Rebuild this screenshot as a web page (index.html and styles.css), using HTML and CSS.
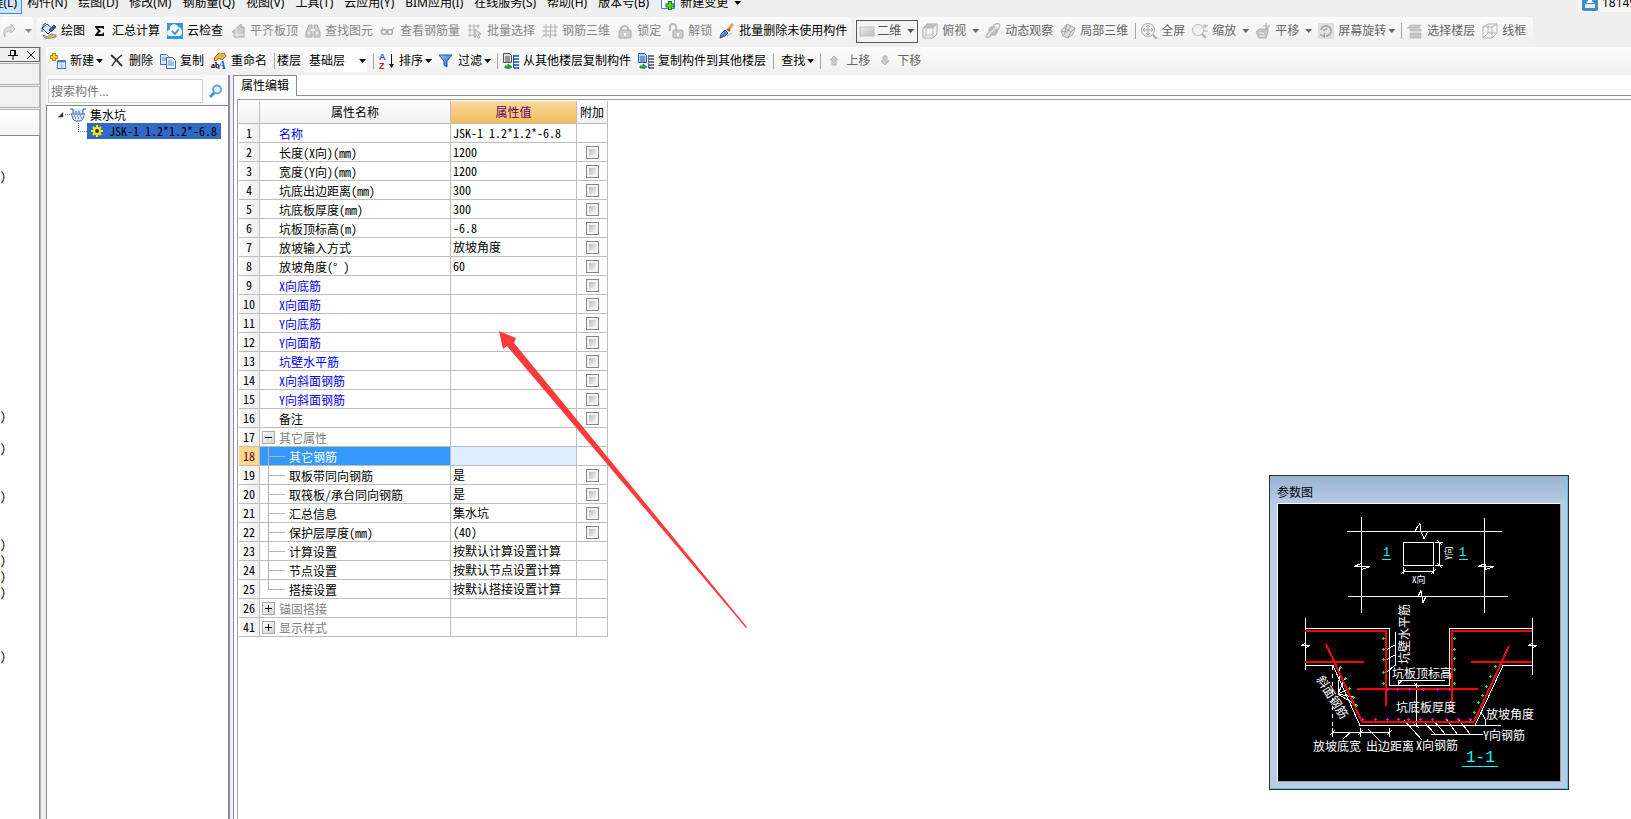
FILE: index.html
```html
<!DOCTYPE html>
<html lang="zh-CN">
<head>
<meta charset="utf-8">
<title>属性编辑</title>
<link rel="stylesheet" href="styles.css">
</head>
<body>
<svg class="defs" aria-hidden="true">
<defs>
<linearGradient id="g-blue" x1="0" y1="0" x2="1" y2="1"><stop offset="0" stop-color="#9cc4f5"/><stop offset="1" stop-color="#1d55c0"/></linearGradient>
<linearGradient id="g-grey" x1="0" y1="0" x2="1" y2="1"><stop offset="0" stop-color="#eee"/><stop offset="1" stop-color="#bbb"/></linearGradient>
<symbol id="i-redo" viewBox="0 0 16 16"><path d="M4 14C1 9 4 4 8 4h2V1l4 5-4 4V8H8C5 8 4 10 4 14z" fill="#ddd" stroke="#bbb"/></symbol>
<symbol id="i-paint" viewBox="0 0 16 16"><path d="M1 5l5-4 6 5-5 5z" fill="#dbe6f5" stroke="#26487f"/><path d="M2 5V2l3-2M1 5v4" fill="none" stroke="#26487f"/><path d="M8 7l5-5 2 2-5 5z" fill="#3c68b0" stroke="#1d3a70"/><path d="M3 12l3 2 4-3 5 1v2l-5 1-4 1-4-3z" fill="#e6b93f" stroke="#7288b5"/></symbol>
<symbol id="i-sigma" viewBox="0 0 16 16"><path d="M3 3h9v3h-1l-1-1H6l3 3-3 3h4l2-2v4H3v-1l3-4-3-4z" fill="#111"/></symbol>
<symbol id="i-cloud" viewBox="0 0 16 16"><path d="M0 0h16v16H0z" fill="#2f9bd8"/><path d="M3 13a3 3 0 010-6 4 4 0 018-3 5 5 0 012 9z" fill="#fff"/><path d="M5 8l3 3 4-5" fill="none" stroke="#2f9bd8" stroke-width="2"/></symbol>
<symbol id="i-slab" viewBox="0 0 16 16"><path d="M2 9l9-8v3l3 0v10H4V9z" fill="#ccc" stroke="#aaa"/><path d="M4 12h10M7 8v6M2 6h5" stroke="#eee"/></symbol>
<symbol id="i-bino" viewBox="0 0 16 16"><path d="M1 14V9l3-7h3v12zM9 14V2h3l3 7v5z" fill="#ccc" stroke="#aaa"/><path d="M6 7h4M3 10h2M11 10h2" stroke="#eee" stroke-width="2"/></symbol>
<symbol id="i-glasses" viewBox="0 0 16 16"><circle cx="4" cy="9" r="2.5" fill="none" stroke="#aaa" stroke-width="1.5"/><circle cx="10" cy="9" r="2.5" fill="none" stroke="#aaa" stroke-width="1.5"/><path d="M12 8l2-4M6 8h2M1 8l2-4" stroke="#aaa"/></symbol>
<symbol id="i-pick" viewBox="0 0 16 16"><path d="M1 3h12M1 7h6M1 12h6M3 1v13M7 1v13M11 1v5" stroke="#b5b5b5" fill="none"/><path d="M8 6l6 5-3 .5 2 3-1.500 1-2-3-1.500 2z" fill="#ddd" stroke="#aaa"/></symbol>
<symbol id="i-rebar" viewBox="0 0 16 16"><path d="M1 4h15M0 8h15M1 12h14M4 1v13M9 1l-1 14M13 1v13M0 14l4-3" stroke="#b0b0b0" fill="none"/></symbol>
<symbol id="i-lock" viewBox="0 0 16 16"><path d="M4 8V5a4 4 0 017 0v3" fill="none" stroke="#bbb" stroke-width="2"/><rect x="2" y="7" width="12" height="8" rx="1" fill="#ccc" stroke="#aaa"/><path d="M8 10v3" stroke="#fff" stroke-width="2"/></symbol>
<symbol id="i-unlock" viewBox="0 0 16 16"><path d="M2 8V4a3 3 0 016 0v3" fill="none" stroke="#bbb" stroke-width="2"/><rect x="5" y="7" width="10" height="8" rx="1" fill="#ccc" stroke="#aaa"/><path d="M10 10v3" stroke="#fff" stroke-width="2"/></symbol>
<symbol id="i-brush" viewBox="0 0 16 16"><path d="M14 1L8 8" stroke="#e9a06a" stroke-width="3"/><path d="M6 7l3 3-3 3-5 2 1-4z" fill="#4a86d0" stroke="#2a5596"/><path d="M9 6l2 2" stroke="#b9442e" stroke-width="2"/><path d="M8 13l5-3M2 12l3-3" stroke="#9fb2cc"/></symbol>
<symbol id="i-plane" viewBox="0 0 16 16"><rect x="1" y="4" width="14" height="9" fill="url(#g-grey)" stroke="#bbb"/></symbol>
<symbol id="i-cube" viewBox="0 0 16 16"><path d="M1 5l4-4h10v10l-4 4H1z" fill="#f3f3f3" stroke="#aaa"/><path d="M1 5l4-4h10l-4 4z" fill="#bbb"/><path d="M1 5h10v10M11 5l4-4M4 6v6h7M1 15l3-3" fill="none" stroke="#bbb"/></symbol>
<symbol id="i-planet" viewBox="0 0 16 16"><circle cx="8" cy="8" r="5" fill="#bbb"/><path d="M4 9C-1 15 1 16 7 12s9-9 7-11-6 2-6 2" fill="none" stroke="#bbb" stroke-width="1.500"/><path d="M4 11l8-7" stroke="#ddd" stroke-width="2"/></symbol>
<symbol id="i-part" viewBox="0 0 16 16"><path d="M1 8l6-7 8 4-2 6-5 4-5-2z" fill="#ddd" stroke="#aaa"/><path d="M4 5l7 4-3 5M7 1l-3 11M11 3L7 9l-6-1M11 9l4-4" fill="none" stroke="#aaa"/></symbol>
<symbol id="i-full" viewBox="0 0 16 16"><circle cx="7" cy="7" r="6.500" fill="#f2f2f2" stroke="#aaa"/><path d="M7 2v10M2 7h10M5 4l2-2 2 2M5 10l2 2 2-2M4 5L2 7l2 2M10 5l2 2-2 2" fill="none" stroke="#aaa"/><path d="M12 12l4 4" stroke="#aaa" stroke-width="2"/></symbol>
<symbol id="i-zoom" viewBox="0 0 16 16"><circle cx="6" cy="7" r="5.500" fill="#f2f2f2" stroke="#bbb"/><path d="M10 11l4 4" stroke="#aaa" stroke-width="2"/><path d="M11 3h5M13 1v4M12 8h4" stroke="#aaa"/></symbol>
<symbol id="i-hand" viewBox="0 0 16 16"><path d="M1 9l3-3 6 0 3-2v5l-2 6H4z" fill="#c4c4c4" stroke="#b0b0b0"/><path d="M8 3h7M11 0v7" stroke="#aaa"/><path d="M4 9l5 2M5 13h5" stroke="#eee"/></symbol>
<symbol id="i-rotate" viewBox="0 0 16 16"><path d="M0 0h16v16H0z" fill="#e0e0e0"/><path d="M3 7a5 5 0 1110 2c-1 3-3 4-5 4" fill="none" stroke="#aaa" stroke-width="2"/><path d="M7 10v5l-3-2z" fill="#999"/><path d="M2 12h2M5 7h2M8 5v2" stroke="#888" fill="none"/></symbol>
<symbol id="i-floors" viewBox="0 0 16 16"><path d="M3 2h11l-2 3H2zM3 6h11v2H3zM3 10h11v2H3zM3 13h11v2H3z" fill="#ccc" stroke="#aaa" stroke-width=".6"/><path d="M0 5h3" stroke="#aaa"/></symbol>
<symbol id="i-wire" viewBox="0 0 16 16"><path d="M1 4l5-3h9v9l-5 5H1zM1 4h9v11M10 4l5-3M6 1v9h9M1 15l5-5" fill="none" stroke="#b5b5b5"/></symbol>
<symbol id="i-new" viewBox="0 0 16 16"><path d="M4 0v8M0 4h8" stroke="#b48c13" stroke-width="4"/><path d="M4 1v6M1 4h6" stroke="#f4cf45" stroke-width="2"/><rect x="7.500" y="7.500" width="8" height="8" fill="#fff" stroke="#4d80c8"/><path d="M7 8.500h9" stroke="#4d80c8" stroke-width="2"/><path d="M9 12h5M9 14h5M11.500 10v5" stroke="#9dbde6"/></symbol>
<symbol id="i-x" viewBox="0 0 16 16"><path d="M2 2c4 3 7 7 11 11" stroke="#333" stroke-width="2" fill="none"/><path d="M13 2C9 5 5 9 3 13" stroke="#333" stroke-width="1.500" fill="none"/></symbol>
<symbol id="i-copy" viewBox="0 0 16 16"><path d="M.5 1.500h6l2 2v8h-8z" fill="#dce9fa" stroke="#3b6fbd"/><path d="M6.500 4.500h6l3 3v8h-9z" fill="#eaf2fc" stroke="#3b6fbd"/><path d="M8 8h4M8 10h6M8 12h6M2 5h4M2 7h4" stroke="#5a8bd3"/></symbol>
<symbol id="i-rename" viewBox="0 0 16 16"><path d="M4 4l4-4h5l2 3-4 4-3-2-3 3-2-1z" fill="#e6b84b" stroke="#96701a"/><text x="0" y="15" class="ic-ab">ab</text><text x="7" y="16" class="ic-a">A</text></symbol>
<symbol id="i-sort" viewBox="0 0 16 16"><text x="0" y="7" class="ic-s ic-sa">A</text><text x="0" y="16" class="ic-s ic-sz">Z</text><path d="M12.500 1v12" stroke="#111"/><path d="M10 11h5l-2.500 4z" fill="#111"/></symbol>
<symbol id="i-funnel" viewBox="0 0 16 16"><path d="M1 2h13L9 8v6l-3-2V8z" fill="url(#g-blue)" stroke="#2458b4"/></symbol>
<symbol id="i-from" viewBox="0 0 16 16"><path d="M.5.500h6l2 2v7h-8z" fill="#ddd" stroke="#555"/><path d="M2 4h5M2 6h5M2 8h5" stroke="#555"/><path d="M2 13h3v-2l4 3-4 2v-1H2z" fill="#29a03a" stroke="#29a03a"/><path d="M11 3h5M11 6h5M11 9h5M11 12h5M11 15h5" stroke="#3d7cc6" stroke-width="2"/><path d="M10.500 2v13" stroke="#1f4f90"/></symbol>
<symbol id="i-to" viewBox="0 0 16 16"><path d="M.5.500h6l2 2v7h-8z" fill="#b8d2f5" stroke="#2b5eb0"/><path d="M2 4h5M2 6h5M2 8h5" stroke="#2b5eb0"/><path d="M2 13h3v-2l4 3-4 2v-1H2z" fill="#29a03a" stroke="#29a03a"/><path d="M11 3h5M11 6h5M11 9h5M11 12h5M11 15h5" stroke="#777" stroke-width="2"/><path d="M10.500 2v13" stroke="#3d7cc6"/></symbol>
<symbol id="i-up" viewBox="0 0 16 16"><path d="M8 3l4 4h-2v5H6V7H4z" fill="#ccc" stroke="#b5b5b5"/></symbol>
<symbol id="i-down" viewBox="0 0 16 16"><path d="M8 12l4-4h-2V3H6v5H4z" fill="#ccc" stroke="#b5b5b5"/></symbol>
<symbol id="i-change" viewBox="0 0 16 16"><path d="M1.500 0v13.500h13V0" fill="#fff" stroke="#3f7fc0"/><path d="M10 6v9M5.500 10.500h9" stroke="#1d7f1d" stroke-width="4"/><path d="M10 7v7M6.500 10.500h7" stroke="#5fd03a" stroke-width="2"/></symbol>
<symbol id="i-user" viewBox="0 0 16 16"><rect width="16" height="16" rx="2" fill="#3f8fc6"/><path d="M6 2h4v4l2 2H4l2-2z" fill="#fff"/><path d="M3 9h10v4H3z" fill="#dff0fb"/></symbol>
<symbol id="i-pit" viewBox="0 0 16 16"><path d="M0 2h3v5h10V2h3M1 6c1 0 1 8 5 8h4c4 0 4-8 5-8" fill="#d9e8fb" stroke="#2c5fb3"/><path d="M4 9h1m2 0h1m2 0h1M5 11h1m2 0h1m2 0h1M6 4v2M9 4v2" stroke="#2c5fb3"/></symbol>
<symbol id="i-sun" viewBox="0 0 12 12"><path d="M6 0v12M0 6h12M2 2l8 8M10 2l-8 8" stroke="#ffee00" stroke-width="2"/><circle cx="6" cy="6" r="4" fill="#ffee00"/><circle cx="6" cy="6" r="2" fill="#333"/></symbol>
</defs>
</svg>

<nav class="menubar">
  <button class="menu active">工程(L)</button>
  <button class="menu">构件(N)</button><button class="menu">绘图(D)</button><button class="menu">修改(M)</button><button class="menu">钢筋量(Q)</button><button class="menu">视图(V)</button><button class="menu">工具(T)</button><button class="menu">云应用(Y)</button><button class="menu">BIM应用(I)</button><button class="menu">在线服务(S)</button><button class="menu">帮助(H)</button><button class="menu">版本号(B)</button>
  <button class="menu with-icon"><svg class="ic"><use href="#i-change"/></svg>新建变更<i class="caret wide"></i></button>
  <button class="menu account"><svg class="ic"><use href="#i-user"/></svg>18149</button>
</nav>

<div class="toolbar-row">
  <div class="bar history"><button class="tool off" aria-label="重做"><svg class="ic"><use href="#i-redo"/></svg><i class="caret wide"></i></button></div>
  <div class="bar commands">
    <button class="tool"><svg class="ic"><use href="#i-paint"/></svg>绘图</button>
    <button class="tool"><svg class="ic"><use href="#i-sigma"/></svg>汇总计算</button>
    <button class="tool"><svg class="ic"><use href="#i-cloud"/></svg>云检查</button>
    <button class="tool off"><svg class="ic"><use href="#i-slab"/></svg>平齐板顶</button>
    <button class="tool off"><svg class="ic"><use href="#i-bino"/></svg>查找图元</button>
    <button class="tool off"><svg class="ic"><use href="#i-glasses"/></svg>查看钢筋量</button>
    <button class="tool off"><svg class="ic"><use href="#i-pick"/></svg>批量选择</button>
    <button class="tool off"><svg class="ic"><use href="#i-rebar"/></svg>钢筋三维</button>
    <button class="tool off"><svg class="ic"><use href="#i-lock"/></svg>锁定</button>
    <button class="tool off"><svg class="ic"><use href="#i-unlock"/></svg>解锁</button>
    <button class="tool"><svg class="ic"><use href="#i-brush"/></svg>批量删除未使用构件</button>
  </div>
  <div class="bar views">
    <label class="view-mode"><svg class="ic"><use href="#i-plane"/></svg><select aria-label="视图模式"><option>二维</option><option>三维</option></select><i class="caret"></i></label>
    <button class="tool dim"><svg class="ic"><use href="#i-cube"/></svg>俯视<i class="caret wide"></i></button>
    <button class="tool dim"><svg class="ic"><use href="#i-planet"/></svg>动态观察</button>
    <button class="tool dim"><svg class="ic"><use href="#i-part"/></svg>局部三维</button>
    <i class="sep"></i>
    <button class="tool dim"><svg class="ic"><use href="#i-full"/></svg>全屏</button>
    <button class="tool dim"><svg class="ic"><use href="#i-zoom"/></svg>缩放<i class="caret wide"></i></button>
    <button class="tool dim"><svg class="ic"><use href="#i-hand"/></svg>平移<i class="caret wide"></i></button>
    <button class="tool dim"><svg class="ic"><use href="#i-rotate"/></svg>屏幕旋转<i class="caret"></i></button>
    <i class="sep"></i>
    <button class="tool dim"><svg class="ic"><use href="#i-floors"/></svg>选择楼层</button>
    <button class="tool dim"><svg class="ic"><use href="#i-wire"/></svg>线框</button>
  </div>
</div>

<main class="main">
  <aside class="dock">
    <header class="dock-head">
      <button class="mini" aria-label="固定"><svg viewBox="0 0 12 12"><path d="M3.500 1.500h5v5h-5zM7.500 2v4M1 6.500h10M6 7v4" fill="none" stroke="#000"/></svg></button>
      <button class="mini" aria-label="关闭"><svg viewBox="0 0 12 12"><path d="M2 2l8 8M10 2l-8 8" fill="none" stroke="#333"/></svg></button>
    </header>
    <div class="dock-strip"></div><div class="dock-strip"></div><div class="dock-strip last"></div>
    <ul class="dock-list">
      <li></li><li></li><li>)</li><li></li><li></li><li></li><li></li><li></li><li></li><li></li><li></li><li></li><li></li><li></li><li></li><li></li><li></li><li>)</li><li></li><li>X)</li><li></li><li></li><li>)</li><li></li><li></li><li>L)</li><li>)</li><li>)</li><li>)</li><li></li><li></li><li></li><li>)</li>
    </ul>
  </aside>
  <div class="gutter"></div>

  <section class="content">
    <div class="toolbar2">
      <button class="tool"><svg class="ic"><use href="#i-new"/></svg>新建<i class="caret"></i></button>
      <button class="tool"><svg class="ic"><use href="#i-x"/></svg>删除</button>
      <button class="tool"><svg class="ic"><use href="#i-copy"/></svg>复制</button>
      <button class="tool"><svg class="ic"><use href="#i-rename"/></svg>重命名</button>
      <i class="sep tight"></i>
      <label class="floor">楼层<select><option>基础层</option><option>首层</option></select><i class="caret"></i></label>
      <i class="sep"></i>
      <button class="tool"><svg class="ic"><use href="#i-sort"/></svg>排序<i class="caret"></i></button>
      <button class="tool"><svg class="ic"><use href="#i-funnel"/></svg>过滤<i class="caret"></i></button>
      <i class="sep"></i>
      <button class="tool"><svg class="ic"><use href="#i-from"/></svg>从其他楼层复制构件</button>
      <button class="tool"><svg class="ic"><use href="#i-to"/></svg>复制构件到其他楼层</button>
      <i class="sep loose"></i>
      <button class="tool">查找<i class="caret"></i></button>
      <i class="sep"></i>
      <button class="tool dim"><svg class="ic"><use href="#i-up"/></svg>上移</button>
      <button class="tool dim"><svg class="ic"><use href="#i-down"/></svg>下移</button>
    </div>

    <div class="work">
      <aside class="components">
        <div class="search">
          <input type="text" placeholder="搜索构件..." aria-label="搜索构件">
          <button aria-label="搜索"><svg viewBox="0 0 14 14"><circle cx="8" cy="5.500" r="4" fill="#e8f4fd" stroke="#5aa7e0" stroke-width="2"/><path d="M5 9l-4 4" stroke="#4a93d0" stroke-width="3"/></svg></button>
        </div>
        <ul class="tree">
          <li class="node"><svg class="twist" viewBox="0 0 8 8"><path d="M7 1v6H1z" fill="#333"/></svg><i class="dots"></i><svg class="ic"><use href="#i-pit"/></svg>集水坑</li>
          <li class="leaf"><i class="elbow"></i><span class="picked"><svg class="sun"><use href="#i-sun"/></svg>JSK-1 1.2*1.2*-6.8</span></li>
        </ul>
      </aside>
      <div class="splitter"></div>
      <section class="editor">
        <div class="tabs"><button class="tab">属性编辑</button></div>
        <div class="sheet">
          <table class="grid">
            <colgroup><col class="c-no"><col class="c-name"><col class="c-val"><col class="c-add"></colgroup>
            <thead><tr><th></th><th>属性名称</th><th class="hot">属性值</th><th>附加</th></tr></thead>
            <tbody>
              <tr><th>1</th><td class="key">名称</td><td>JSK-1 1.2*1.2*-6.8</td><td></td></tr>
              <tr><th>2</th><td>长度(X向)(mm)</td><td>1200</td><td><input type="checkbox" aria-label="附加 长度"></td></tr>
              <tr><th>3</th><td>宽度(Y向)(mm)</td><td>1200</td><td><input type="checkbox" aria-label="附加 宽度"></td></tr>
              <tr><th>4</th><td>坑底出边距离(mm)</td><td>300</td><td><input type="checkbox" aria-label="附加 坑底出边距离"></td></tr>
              <tr><th>5</th><td>坑底板厚度(mm)</td><td>300</td><td><input type="checkbox" aria-label="附加 坑底板厚度"></td></tr>
              <tr><th>6</th><td>坑板顶标高(m)</td><td>-6.8</td><td><input type="checkbox" aria-label="附加 坑板顶标高"></td></tr>
              <tr><th>7</th><td>放坡输入方式</td><td>放坡角度</td><td><input type="checkbox" aria-label="附加 放坡输入方式"></td></tr>
              <tr><th>8</th><td>放坡角度(° )</td><td>60</td><td><input type="checkbox" aria-label="附加 放坡角度"></td></tr>
              <tr><th>9</th><td class="key">X向底筋</td><td></td><td><input type="checkbox" aria-label="附加 X向底筋"></td></tr>
              <tr><th>10</th><td class="key">X向面筋</td><td></td><td><input type="checkbox" aria-label="附加 X向面筋"></td></tr>
              <tr><th>11</th><td class="key">Y向底筋</td><td></td><td><input type="checkbox" aria-label="附加 Y向底筋"></td></tr>
              <tr><th>12</th><td class="key">Y向面筋</td><td></td><td><input type="checkbox" aria-label="附加 Y向面筋"></td></tr>
              <tr><th>13</th><td class="key">坑壁水平筋</td><td></td><td><input type="checkbox" aria-label="附加 坑壁水平筋"></td></tr>
              <tr><th>14</th><td class="key">X向斜面钢筋</td><td></td><td><input type="checkbox" aria-label="附加 X向斜面钢筋"></td></tr>
              <tr><th>15</th><td class="key">Y向斜面钢筋</td><td></td><td><input type="checkbox" aria-label="附加 Y向斜面钢筋"></td></tr>
              <tr><th>16</th><td>备注</td><td></td><td><input type="checkbox" aria-label="附加 备注"></td></tr>
              <tr><th>17</th><td class="group open"><button class="fold" aria-label="折叠"></button>其它属性</td><td></td><td></td></tr>
              <tr class="current"><th>18</th><td class="child">其它钢筋</td><td></td><td></td></tr>
              <tr><th>19</th><td class="child">取板带同向钢筋</td><td>是</td><td><input type="checkbox" aria-label="附加 取板带同向钢筋"></td></tr>
              <tr><th>20</th><td class="child">取筏板/承台同向钢筋</td><td>是</td><td><input type="checkbox" aria-label="附加 取筏板承台同向钢筋"></td></tr>
              <tr><th>21</th><td class="child">汇总信息</td><td>集水坑</td><td><input type="checkbox" aria-label="附加 汇总信息"></td></tr>
              <tr><th>22</th><td class="child">保护层厚度(mm)</td><td>(40)</td><td><input type="checkbox" aria-label="附加 保护层厚度"></td></tr>
              <tr><th>23</th><td class="child">计算设置</td><td>按默认计算设置计算</td><td></td></tr>
              <tr><th>24</th><td class="child">节点设置</td><td>按默认节点设置计算</td><td></td></tr>
              <tr><th>25</th><td class="child end">搭接设置</td><td>按默认搭接设置计算</td><td></td></tr>
              <tr><th>26</th><td class="group"><button class="fold" aria-label="展开"></button>锚固搭接</td><td></td><td></td></tr>
              <tr><th>41</th><td class="group"><button class="fold" aria-label="展开"></button>显示样式</td><td></td><td></td></tr>
            </tbody>
          </table>
        </div>
      </section>
    </div>
  </section>
</main>

<svg class="pointer" viewBox="499 331 248 297" aria-hidden="true"><path d="M499 331l17 7-2 5 233 284-1 1L507 346l-4 3z" fill="#fd3a3a"/></svg>

<section class="param-window">
  <h2>参数图</h2>
  <svg class="drawing" viewBox="1278 504 282 277">
    <defs>
      <marker id="m-green" markerWidth="3" markerHeight="3" refX="1.500" refY="1.500" markerUnits="userSpaceOnUse"><path d="M0 1.500h3M1.500 0v3" stroke="#0f0"/></marker>
      <marker id="m-pink" markerWidth="3" markerHeight="3" refX="1.500" refY="1.500" markerUnits="userSpaceOnUse"><path d="M0 1.500h3M1.500 0v3" stroke="#f0f"/></marker>
    </defs>
    <g class="white">
      <path d="M1347 531.500h68l2-4 3-4 1 8 3 7 4-7h-13 87M1361.500 517v96M1484.500 518v95M1348 596.500h70l3-6 2 12 3-6h-8 90"/>
      <path d="M1354 566.500l7-3 1 6 8-3zM1478 566.500l7-3 1 6 8-3z"/>
      <path d="M1403.500 542.500h30v23h-30z"/>
      <path d="M1439.500 542v23M1435 542.500h8M1435 565.500h8M1437 540l5 5M1437 563l5 5M1403 571.500h31M1403.500 567v7M1433.500 567v7M1401 574l5-5M1431 574l5-5"/>
      <path d="M1305.500 618v52M1532.500 618v57M1301 645.500l4-2 1 4 4-2zM1528 645.500l4-2 1 4 4-2z"/>
      <path d="M1305 628.500h84.500v57h60v-57h83M1305 665.500h28l27 60h141M1475 725.500l28-60h30"/>
      <path d="M1332.500 666v60" stroke-dasharray="4 4"/>
      <path d="M1416.500 683v43M1414 683l5 4M1414 724l5 4M1400 680.500h45M1398.500 684v-4h4z"/>
      <path d="M1395.500 632v34M1386 650l9-5M1386 660l9-5M1386 673l9-8"/>
      <path d="M1340 667l-2 27 7-16M1350 688l-12 6 15 3M1356 705l-18-11"/>
      <path d="M1332 732.500h58M1332.500 728v9M1360.500 728v9M1389.500 728v9M1330 735l5-5M1358 735l5-5M1387 735l5-5M1343 739l8-7M1368 729l13 13M1404 720l18 20"/>
      <path d="M1431 734.500h52M1423 721l12 13M1434 721l11 13M1447 720l10 14M1459 720l11 14M1480 712q6 5 6 13"/>
    </g>
    <g class="red">
      <path d="M1305 631h81v75M1532 631h-80v75M1305 662h59M1471 662h61M1357 689h121M1362 722h112"/>
      <path d="M1326 644l36 78M1474 722l35-76" class="thin"/>
    </g>
    <g class="dots green">
      <polyline points="1383.500,638.500 1383.500,649.500 1383.500,659.500 1383.500,672.500 1383.500,683.500 1340.500,667.500 1345.500,678.500 1349.500,688.500 1353.500,697.500 1356.500,705.500"/>
      <polyline points="1454.500,638.500 1454.500,649.500 1454.500,658.500 1454.500,669.500 1454.500,683.500 1495.500,666.500 1490.500,676.500 1486.500,686.500 1482.500,695.500 1478.500,702.500 1474.500,712.500"/>
    </g>
    <g class="dots pink">
      <polyline points="1387.500,689.500 1397.500,689.500 1409.500,689.500 1423.500,689.500 1437.500,689.500 1449.500,689.500 1362.500,719.500 1375.500,719.500 1387.500,719.500 1398.500,719.500 1408.500,719.500 1420.500,719.500 1432.500,719.500 1446.500,719.500 1458.500,719.500 1470.500,719.500"/>
    </g>
    <g class="labels">
      <text x="1412" y="583" class="small">X向</text>
      <text transform="translate(1452 560) rotate(-90)" class="small">Y向</text>
      <text transform="translate(1409 664) rotate(-90)">坑壁水平筋</text>
      <text x="1392" y="678">坑板顶标高</text>
      <text x="1396" y="712">坑底板厚度</text>
      <text x="1486" y="719">放坡角度</text>
      <text x="1483" y="740">Y向钢筋</text>
      <text x="1416" y="750">X向钢筋</text>
      <text x="1313" y="751">放坡底宽</text>
      <text x="1366" y="751">出边距离</text>
      <text transform="translate(1316 679) rotate(58)" class="tilt">斜面钢筋</text>
    </g>
    <g class="cyan">
      <text x="1383" y="556">1</text><text x="1459" y="556">1</text><text x="1466" y="762" class="big">1-1</text>
      <path d="M1382 559.500h9M1459 559.500h9M1462 766.500h36"/>
    </g>
  </svg>
</section>
</body>
</html>
```
FILE: styles.css
```css
* { box-sizing: border-box; }
html, body { height: 100%; }
body {
  margin: 0;
  display: flex;
  flex-direction: column;
  overflow: hidden;
  position: relative;
  background: #efefef;
  color: #000;
  font: 12px/16px "Noto Sans", "Noto Sans CJK SC", sans-serif;
}
button, input, select { font: inherit; color: inherit; margin: 0; padding: 0; border: 0; background: none; border-radius: 0; }
ul { margin: 0; padding: 0; list-style: none; }
.defs { position: absolute; width: 0; height: 0; }
.ic { width: 16px; height: 16px; flex: none; }
.ic-ab { font: bold 8px "Liberation Serif", serif; }
.ic-a { font: italic bold 12px "Liberation Serif", serif; fill: #2357b5; }
.ic-s { font: bold 9px "Liberation Sans", sans-serif; }
.ic-sa { fill: #2c5aa8; }
.ic-sz { fill: #a02c2c; }

.caret { flex: none; width: 7px; height: 4px; margin: 0 -1px 0 2px; background: currentColor; clip-path: polygon(0 0, 100% 0, 50% 100%); }
.caret.wide { margin-left: 6px; }
.sep { flex: none; width: 1px; height: 16px; margin-right: 5px; background: #a5a5a5; }
.sep.tight { margin-right: 2px; }
.sep.loose { margin-right: 7px; }

.menubar { flex: none; display: flex; align-items: flex-start; height: 17px; overflow: hidden; }
.menu { flex: none; height: 18px; margin: -6px 11px 0 0; display: flex; align-items: center; white-space: nowrap; }
.menu.active { width: 22px; height: 20px; margin-right: 5px; padding: 0 4px 2px 0; justify-content: flex-end; overflow: hidden; background: #cce4fb; border: 1px solid #3c8fe0; border-left: 0; }
.menu.with-icon { gap: 4px; }
.menu.with-icon .caret { margin-left: 2px; }
.menu.account { height: 18px; width: 53px; margin: -6px 0 0 auto; padding-left: 4px; gap: 4px; background: #f7f7f7; overflow: hidden; }

.toolbar-row { flex: none; display: flex; gap: 4px; height: 30px; }
.bar { display: flex; align-items: center; height: 28px; border-radius: 3px; background: linear-gradient(#fbfbfb, #efefef); }
.bar.history { flex: none; width: 33px; padding-left: 1px; overflow: hidden; }
.bar.history .caret { margin-left: 4px; }
.bar.commands { padding-left: 4px; }
.bar.views { padding-left: 1px; }
.tool { flex: none; display: flex; align-items: center; height: 24px; margin-right: 7px; white-space: nowrap; }
.tool .ic { margin-right: 4px; }
.tool.off { color: #868686; }
.tool.dim { color: #666; }
.bar.commands .tool:last-child { margin-right: 4px; }
.view-mode { flex: none; display: flex; align-items: center; width: 62px; height: 23px; margin-right: 4px; padding-left: 2px; border: 1px solid #555; background: #f4f4f4; color: #555; }
select { appearance: none; }
.view-mode select { width: 28px; margin-left: 2px; }

.main { flex: 1; min-height: 0; display: flex; }
.dock { flex: none; width: 41px; display: flex; flex-direction: column; border-right: 1px solid #b5b5b5; }
.dock-head { flex: none; display: flex; align-items: center; justify-content: flex-end; gap: 6px; height: 15px; padding-right: 2px; border: 1px solid #666; border-left: 0; }
.mini { width: 12px; height: 12px; }
.mini svg { display: block; }
.dock-strip { flex: none; height: 22px; margin-top: 1px; border: 1px solid #b0b0b0; border-left: 0; background: #f0f0f0; }
.dock-strip.last { height: 26px; background: linear-gradient(#fff, #f4f4f4); border-bottom: 0; }
.dock-list { flex: 1; min-height: 0; overflow: hidden; border-top: 1px solid #828790; border-right: 1px solid #828790; background: #fff; font-family: "Noto Sans Mono CJK SC", "Noto Sans CJK SC", sans-serif; }
.dock-list li { display: flex; justify-content: flex-end; width: 6px; height: 16px; overflow: hidden; }
.gutter { flex: none; width: 5px; background: #eee; }

.content { flex: 1; min-width: 0; display: flex; flex-direction: column; }
.toolbar2 { flex: none; display: flex; align-items: center; height: 28px; padding-left: 4px; background: linear-gradient(#fdfdfd, #efefef); }
.floor { flex: none; display: flex; align-items: center; width: 92px; margin-right: 4px; }
.floor select { width: 60px; height: 22px; margin-left: 6px; padding-left: 2px; background: #fff; }
.floor .caret { margin-left: -8px; }
.work { flex: 1; min-height: 0; display: flex; background: #fff; }
.components { flex: none; width: 184px; display: flex; flex-direction: column; border-right: 2px solid #888d96; }
.search { flex: none; display: flex; align-items: center; height: 30px; padding: 2px 3px 0 2px; gap: 4px; background: #f8f8f8; }
.search input { flex: 1; min-width: 0; height: 24px; padding-left: 2px; border: 1px solid #d0d0d0; background: #fff; }
.search input::placeholder { color: #777; opacity: 1; }
.search button { flex: none; display: flex; align-items: center; justify-content: center; width: 18px; height: 22px; background: #fff; }
.search svg { width: 14px; height: 14px; }
.tree { flex: 1; min-height: 0; border-top: 1px solid #828790; border-left: 1px solid #828790; font-family: "Noto Sans Mono CJK SC", "Noto Sans CJK SC", sans-serif; }
.node { display: flex; align-items: center; height: 17px; padding-left: 10px; }
.twist { width: 7px; height: 7px; }
.dots { width: 5px; margin-left: 1px; border-top: 1px dotted #888; }
.node .ic { margin-right: 4px; }
.leaf { display: flex; height: 16px; padding-left: 31px; }
.elbow { width: 9px; height: 9px; border-left: 1px dotted #777; border-bottom: 1px dotted #777; }
.picked { display: flex; align-items: center; gap: 6px; padding: 0 4px; background: #316ac5; white-space: nowrap; }
.sun { width: 12px; height: 12px; }
.splitter { flex: none; width: 3px; background: #efefef; }

.editor { flex: 1; min-width: 0; display: flex; flex-direction: column; }
.tabs { flex: none; display: flex; height: 21px; border-bottom: 1px solid #8c8c96; }
.tab { height: 21px; width: 64px; border: solid #8c8c96; border-width: 1px 1px 0; background: #fff; }
.sheet { flex: 1; min-height: 0; padding: 3px 0 0 3px; border-left: 1px solid #8c8c96; }
.grid { display: block; height: 100%; padding: 1px 0 0 1px; border-top: 1px solid #a0a0a0; border-left: 1px solid #a0a0a0; border-spacing: 0; font-family: "Noto Sans Mono CJK SC", "Noto Sans CJK SC", sans-serif; }
.c-no { width: 21px; }
.c-name { width: 191px; }
.c-val { width: 126px; }
.c-add { width: 31px; }
.grid th, .grid td { height: 19px; padding: 0; border: solid #bdbdbd; border-width: 0 1px 1px 0; font-weight: normal; text-align: left; white-space: nowrap; line-height: 16px; }
.grid thead th { height: 23px; text-align: center; background: linear-gradient(#fff, #f0f0f0); }
.grid thead .hot { background: linear-gradient(#fad9a0, #f0bd5c); color: #600060; }
.grid tbody th { text-align: center; background: linear-gradient(90deg, #fdfdfd, #f0f0f0); }
.grid td:nth-child(2) { padding-left: 19px; padding-top: 1px; position: relative; }
.grid td:nth-child(3) { padding-left: 2px; }
.grid td:nth-child(4) { text-align: center; line-height: 0; }
.grid .key { color: #0000f0; }
.grid .group { color: #808080; }
.grid td.child { padding-left: 29px; }
.grid .current th { background: #ffd78c; color: #600030; }
.grid .current .child { background: #3399ff; color: #fff; }
.grid .current td:nth-child(3) { background: #dfeefe; }
.child::before { content: ""; position: absolute; left: 8px; top: 0; width: 1px; height: 19px; background: #b5b5b5; }
.child.end::before { height: 10px; }
.child::after { content: ""; position: absolute; left: 9px; top: 9px; width: 16px; height: 1px; background: #b5b5b5; }
.fold { position: absolute; left: 2px; top: 3px; width: 13px; height: 13px; border: 1px solid #aaa; background: linear-gradient(#000, #000) center / 7px 1px no-repeat, linear-gradient(#000, #000) center / 1px 7px no-repeat, linear-gradient(135deg, #fff, #ccd2dc); }
.open .fold { background: linear-gradient(#000, #000) center / 7px 1px no-repeat, linear-gradient(135deg, #fff, #ccd2dc); }
.grid input { appearance: none; width: 13px; height: 13px; padding: 2px; border: 1px solid #868787; background: linear-gradient(135deg, #b4b9c2, #f6f6f6) content-box, #f4f4f4; }

.pointer { position: absolute; left: 499px; top: 331px; width: 248px; height: 297px; }

.param-window { position: absolute; left: 1269px; top: 475px; width: 300px; padding: 0 7px 7px; border: 1px solid #333; box-shadow: inset -1px -1px #4fc8e8; background: linear-gradient(#99b4d1, #b9cde6 30px); }
.param-window h2 { margin: 0; height: 27px; padding-top: 9px; font-size: 12px; line-height: 16px; font-weight: normal; }
.drawing { display: block; width: 100%; border: 1px solid; border-color: #fff #a0a0a0 #a0a0a0 #fff; background: #000; shape-rendering: crispEdges; }
.drawing path { fill: none; }
.white path { stroke: #fff; }
.red path { stroke: #f00; stroke-width: 2px; }
.red .thin { stroke-width: 2px; }
.dots polyline { fill: none; stroke: none; }
.green polyline { marker: url(#m-green); }
.pink polyline { marker: url(#m-pink); }
.labels text { fill: #fff; font: 12px "Noto Sans Mono CJK SC", "Noto Sans CJK SC", sans-serif; }
.labels .small { font-size: 9px; }
.labels .tilt { font-size: 12px; }
.cyan text { fill: #0ff; font: 12px "Liberation Mono", monospace; }
.cyan .big { font-size: 16px; }
.cyan path { stroke: #0ff; }
```
